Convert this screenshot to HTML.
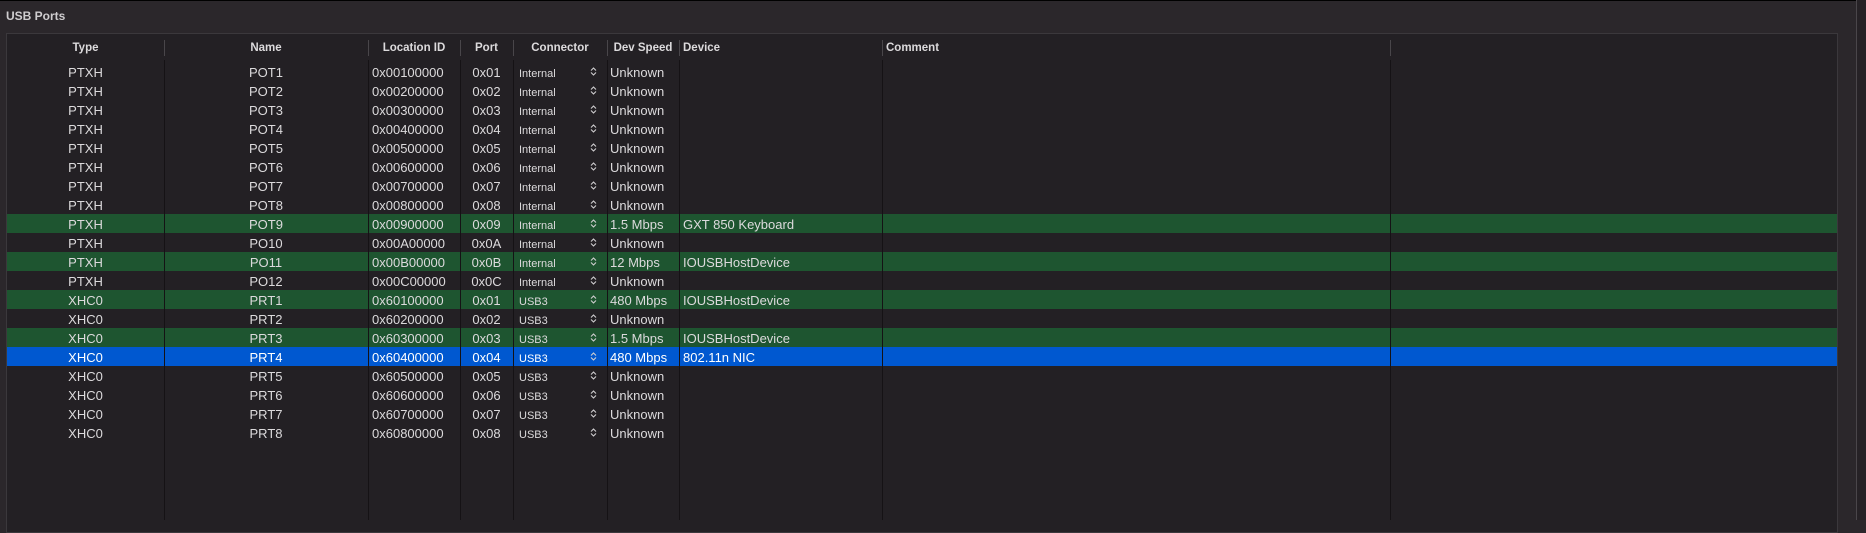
<!DOCTYPE html>
<html><head><meta charset="utf-8"><style>
*{margin:0;padding:0;box-sizing:border-box}
body{width:1866px;height:520px;background:#2b272b;overflow:hidden;position:relative;font-family:"Liberation Sans",sans-serif;color:#dcdadc}
.top{position:absolute;left:0;top:0;width:1856px;height:1px;background:#000}
.rs{position:absolute;left:1856px;top:0;width:1px;height:520px;background:#4a464a}
.rs2{position:absolute;left:1857px;top:0;width:9px;height:520px;background:#262226}
.title{position:absolute;left:6px;top:9px;font-size:12px;font-weight:bold;color:#cfcdcf}
.tbl{position:absolute;left:6px;top:33px;width:1832px;height:500px;background:#232024;border:1px solid #3b383c}
.sep{position:absolute;width:1px;background:#151215}
.hsep{position:absolute;top:40px;height:16px;width:1px;background:#49464a}
.row{position:absolute;left:7px;width:1830px;height:19px;font-size:13px;line-height:19px}
.g{background:#1e5530}.b{background:#0058d0;color:#fff}
.row span{position:absolute;top:1px;white-space:nowrap}
.c{text-align:center}
.hd{position:absolute;top:40px;height:16px;line-height:16px;font-size:11.5px;font-weight:bold;color:#dcdadc}
.con{font-size:11px;top:3px!important}
.row svg{position:absolute;left:583px;top:5px}
</style></head><body>
<div class="top"></div><div class="rs"></div><div class="rs2"></div>
<div class="title">USB Ports</div>
<div class="tbl"></div>
<div id="rows"></div>
<div class="hd c" style="left:7px;width:157px">Type</div>
<div class="hd c" style="left:164px;width:204px">Name</div>
<div class="hd c" style="left:368px;width:92px">Location ID</div>
<div class="hd c" style="left:460px;width:53px">Port</div>
<div class="hd c" style="left:513px;width:94px">Connector</div>
<div class="hd c" style="left:607px;width:72px">Dev Speed</div>
<div class="hd" style="left:683px">Device</div>
<div class="hd" style="left:886px">Comment</div>
<div class="hsep" style="left:164px"></div><div class="hsep" style="left:368px"></div><div class="hsep" style="left:460px"></div><div class="hsep" style="left:513px"></div><div class="hsep" style="left:607px"></div><div class="hsep" style="left:679px"></div><div class="hsep" style="left:882px"></div><div class="hsep" style="left:1390px"></div>
<script>
var d=[["PTXH","POT1","0x00100000","0x01","Internal","Unknown","",""],
["PTXH","POT2","0x00200000","0x02","Internal","Unknown","",""],
["PTXH","POT3","0x00300000","0x03","Internal","Unknown","",""],
["PTXH","POT4","0x00400000","0x04","Internal","Unknown","",""],
["PTXH","POT5","0x00500000","0x05","Internal","Unknown","",""],
["PTXH","POT6","0x00600000","0x06","Internal","Unknown","",""],
["PTXH","POT7","0x00700000","0x07","Internal","Unknown","",""],
["PTXH","POT8","0x00800000","0x08","Internal","Unknown","",""],
["PTXH","POT9","0x00900000","0x09","Internal","1.5 Mbps","GXT 850 Keyboard","g"],
["PTXH","PO10","0x00A00000","0x0A","Internal","Unknown","",""],
["PTXH","PO11","0x00B00000","0x0B","Internal","12 Mbps","IOUSBHostDevice","g"],
["PTXH","PO12","0x00C00000","0x0C","Internal","Unknown","",""],
["XHC0","PRT1","0x60100000","0x01","USB3","480 Mbps","IOUSBHostDevice","g"],
["XHC0","PRT2","0x60200000","0x02","USB3","Unknown","",""],
["XHC0","PRT3","0x60300000","0x03","USB3","1.5 Mbps","IOUSBHostDevice","g"],
["XHC0","PRT4","0x60400000","0x04","USB3","480 Mbps","802.11n NIC","b"],
["XHC0","PRT5","0x60500000","0x05","USB3","Unknown","",""],
["XHC0","PRT6","0x60600000","0x06","USB3","Unknown","",""],
["XHC0","PRT7","0x60700000","0x07","USB3","Unknown","",""],
["XHC0","PRT8","0x60800000","0x08","USB3","Unknown","",""]];
var h="";
var arr='<svg width="7" height="9" viewBox="0 0 7 9"><path d="M1 3.5L3.5 1L6 3.5M1 5.5L3.5 8L6 5.5" fill="none" stroke="#d0ced0" stroke-width="1.1"/></svg>';
d.forEach(function(r,i){h+='<div class="row '+r[7]+'" style="top:'+(62+19*i)+'px">'+
'<span class="c" style="left:0;width:157px">'+r[0]+'</span>'+
'<span class="c" style="left:157px;width:204px">'+r[1]+'</span>'+
'<span style="left:365px">'+r[2]+'</span>'+
'<span class="c" style="left:453px;width:53px">'+r[3]+'</span>'+
'<span class="con" style="left:512px">'+r[4]+'</span>'+arr+
'<span style="left:603px">'+r[5]+'</span>'+
'<span style="left:676px">'+r[6]+'</span></div>';});
[164,368,460,513,607,679,882,1390].forEach(function(x){h+='<div class="sep" style="left:'+x+'px;top:60px;height:460px"></div>';});
document.getElementById("rows").innerHTML=h;
</script>
</body></html>
